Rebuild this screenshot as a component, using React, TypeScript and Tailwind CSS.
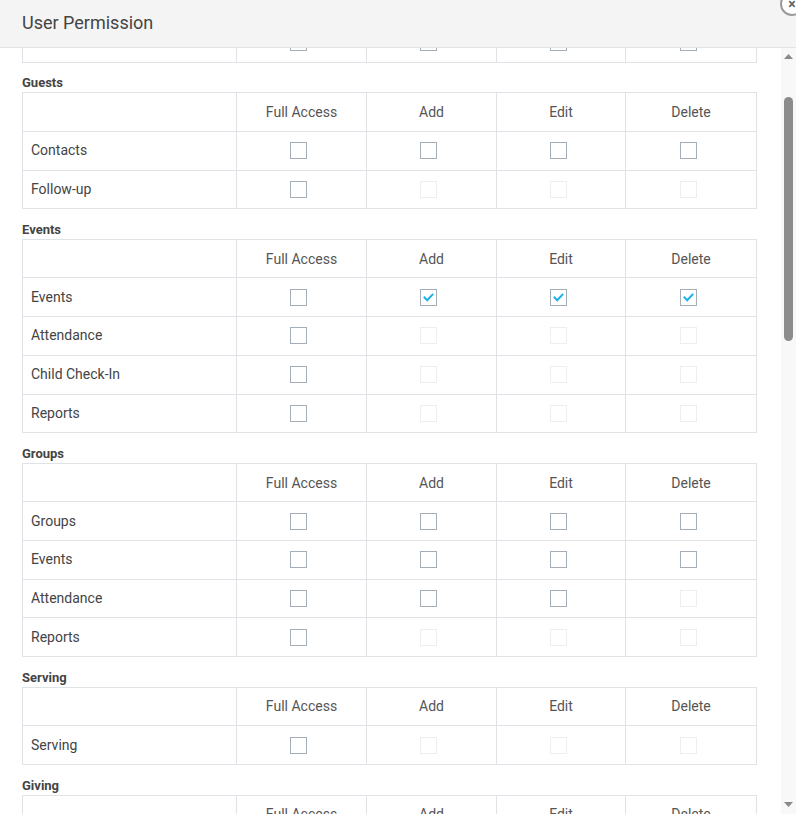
import React from 'react';

type Box = 'on' | 'off' | 'dis';

type Row = {
  label: string;
  boxes: Box[];
};

type Section = {
  title: string;
  rows: Row[];
};

const sections: Section[] = [
  {
    title: 'Guests',
    rows: [
      { label: 'Contacts', boxes: ['off', 'off', 'off', 'off'] },
      { label: 'Follow-up', boxes: ['off', 'dis', 'dis', 'dis'] },
    ],
  },
  {
    title: 'Events',
    rows: [
      { label: 'Events', boxes: ['off', 'on', 'on', 'on'] },
      { label: 'Attendance', boxes: ['off', 'dis', 'dis', 'dis'] },
      { label: 'Child Check-In', boxes: ['off', 'dis', 'dis', 'dis'] },
      { label: 'Reports', boxes: ['off', 'dis', 'dis', 'dis'] },
    ],
  },
  {
    title: 'Groups',
    rows: [
      { label: 'Groups', boxes: ['off', 'off', 'off', 'off'] },
      { label: 'Events', boxes: ['off', 'off', 'off', 'off'] },
      { label: 'Attendance', boxes: ['off', 'off', 'off', 'dis'] },
      { label: 'Reports', boxes: ['off', 'dis', 'dis', 'dis'] },
    ],
  },
  {
    title: 'Serving',
    rows: [{ label: 'Serving', boxes: ['off', 'dis', 'dis', 'dis'] }],
  },
  {
    title: 'Giving',
    rows: [],
  },
];

const columns = ['Full Access', 'Add', 'Edit', 'Delete'];

function Checkbox({ state }: { state: Box }) {
  if (state === 'dis') {
    return <div className="w-[17px] h-[17px] mr-[6px] border border-[#eceef0] bg-white" />;
  }
  return (
    <div className="w-[17px] h-[17px] mr-[6px] border border-[#a3aeb8] bg-white flex items-center justify-center">
      {state === 'on' && (
        <svg width="13" height="13" viewBox="0 0 13 13" fill="none">
          <polyline
            points="2.5,6.5 5.2,9.2 10.5,3.6"
            stroke="#1fb0ea"
            strokeWidth="2"
            strokeLinecap="square"
          />
        </svg>
      )}
    </div>
  );
}

function TableRow({ row }: { row: Row }) {
  return (
    <div className="grid grid-cols-[214px_130px_130px_129px_1fr] h-[38.7px] border-t border-[#dfe2e6] divide-x divide-[#dfe2e6]">
      <div className="flex items-center pl-[8px] text-[14px] text-[#444]">{row.label}</div>
      {row.boxes.map((b, i) => (
        <div key={i} className="flex items-center justify-center">
          <Checkbox state={b} />
        </div>
      ))}
    </div>
  );
}

function HeaderRow() {
  return (
    <div className="grid grid-cols-[214px_130px_130px_129px_1fr] h-[37.7px] divide-x divide-[#dfe2e6]">
      <div />
      {columns.map((c) => (
        <div key={c} className="flex items-center justify-center text-[14px] text-[#555] pt-[1px]">
          {c}
        </div>
      ))}
    </div>
  );
}

export default function App() {
  return (
    <div
      className="relative w-[796px] h-[814px] bg-white flex flex-col overflow-hidden"
      style={{ fontFamily: 'Roboto, "Liberation Sans", sans-serif' }}
    >
      {/* Header */}
      <div className="h-[48px] shrink-0 bg-[#f4f4f4] border-b border-[#e4e4e4] flex items-center px-[22px] z-10">
        <h2 className="text-[18px] text-[#444] leading-none -mt-[2px]">User Permission</h2>
      </div>

      {/* Close button */}
      <button className="absolute top-[-8px] left-[780px] w-[24px] h-[24px] rounded-full border-2 border-[#9a9a9a] bg-white flex items-center justify-center z-20">
        <span className="text-[14px] leading-none font-bold text-[#666]">×</span>
      </button>

      {/* Body */}
      <div className="flex flex-1 min-h-0">
        <div className="flex-1 overflow-hidden pl-[22px] pr-[24px]">
          {/* previous section, scrolled past */}
          <div className="-mt-[26px] border border-[#dfe2e6]">
            <TableRow row={{ label: '', boxes: ['off', 'off', 'off', 'off'] }} />
          </div>

          {sections.map((s) => (
            <div key={s.title}>
              <div className="mt-[11.5px] h-[18px] leading-[18px] text-[13px] font-bold text-[#444]">
                {s.title}
              </div>
              <div className="border border-[#dfe2e6]">
                <HeaderRow />
                {s.rows.map((r, i) => (
                  <TableRow key={s.title + i} row={r} />
                ))}
              </div>
            </div>
          ))}
        </div>

        {/* Scrollbar */}
        <div className="w-[15px] shrink-0 bg-[#f8f8f8] flex flex-col items-center">
          <svg width="9" height="5" viewBox="0 0 9 5" className="mt-[6px]">
            <polygon points="4.5,0 9,5 0,5" fill="#8a8a8a" />
          </svg>
          <div className="mt-[38px] w-[9px] h-[244px] rounded-full bg-[#8c8c8c]" />
          <div className="flex-1" />
          <svg width="9" height="5" viewBox="0 0 9 5" className="mb-[7px]">
            <polygon points="0,0 9,0 4.5,5" fill="#8a8a8a" />
          </svg>
        </div>
      </div>
    </div>
  );
}
